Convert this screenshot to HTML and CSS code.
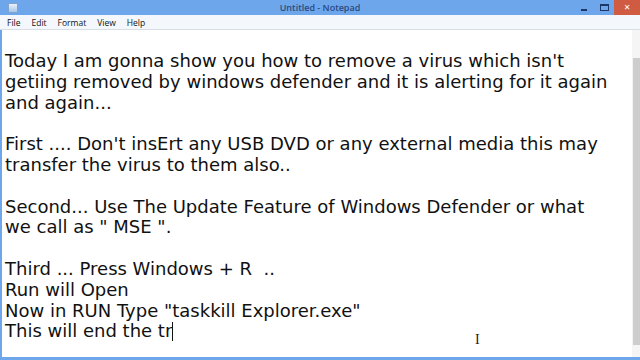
FILE: index.html
```html
<!DOCTYPE html>
<html>
<head>
<meta charset="utf-8">
<link rel="stylesheet" href="styles.css">
</head>
<body>
<div class="window">
  <div class="titlebar">
    <div class="appicon"></div>
    <div class="title">Untitled - Notepad</div>
    <div class="controls">
      <div class="ctl min"><span></span></div>
      <div class="ctl max"><span></span></div>
      <div class="ctl close">✕</div>
    </div>
  </div>
  <div class="menubar">
    <span>File</span><span>Edit</span><span>Format</span><span>View</span><span>Help</span>
  </div>
  <div class="client">
    <div class="editor">
      <p>Today I am gonna show you how to remove a virus which isn't</p>
      <p>getiing removed by windows defender and it is alerting for it again</p>
      <p>and again...</p>
      <p class="blank">&nbsp;</p>
      <p>First .... Don't insErt any USB DVD or any external media this may</p>
      <p>transfer the virus to them also..</p>
      <p class="blank">&nbsp;</p>
      <p>Second... Use The Update Feature of Windows Defender or what</p>
      <p>we call as " MSE ".</p>
      <p class="blank">&nbsp;</p>
      <p>Third ... Press Windows + R &nbsp;..</p>
      <p>Run will Open</p>
      <p>Now in RUN Type "taskkill Explorer.exe"</p>
      <p>This will end the tr<span class="caret"></span></p>
    </div>
    <div class="scrollbar">
      <div class="arrow up"></div>
      <div class="track"></div>
      <div class="arrow down"></div>
    </div>
    <div class="ibeam">I</div>
  </div>
</div>
</body>
</html>
```
FILE: styles.css
```css
html, body {
  margin: 0;
  padding: 0;
  width: 640px;
  height: 360px;
  overflow: hidden;
  background: #6ea6ec;
}
.window {
  width: 640px;
  height: 360px;
  display: flex;
  flex-direction: column;
  background: #6ea6ec;
}
.titlebar {
  height: 15px;
  display: flex;
  align-items: center;
  position: relative;
  background: #6ea6ec;
}
.appicon {
  width: 8px;
  height: 8px;
  margin-left: 8px;
  background: linear-gradient(#e9f1fb, #a9c6e8);
  border: 1px solid #7fa3cc;
}
.title {
  position: absolute;
  left: 0;
  right: 0;
  text-align: center;
  font: 600 9px "Open Sans", sans-serif;
  color: #2a4a80;
  top: 1px;
}
.controls {
  margin-left: auto;
  display: flex;
  height: 15px;
}
.ctl {
  width: 20px;
  height: 15px;
  display: flex;
  align-items: center;
  justify-content: center;
}
.min span {
  width: 6px;
  height: 2px;
  background: #1d3766;
  margin-top: 5px;
}
.max span {
  width: 7px;
  height: 4px;
  border: 1px solid #1d3766;
  border-top-width: 2px;
}
.close {
  width: 26px;
  background: #cf5b43;
  color: #fff;
  font: bold 8px "DejaVu Sans", sans-serif;
}
.menubar {
  height: 14px;
  background: #f4f8fc;
  display: flex;
  align-items: center;
  padding-left: 7px;
  font: 8.5px "Open Sans", sans-serif;
  color: #111;
  border-bottom: 1px solid #d8dee6;
}
.menubar span { margin-right: 11px; }
.client {
  flex: 1;
  display: flex;
  background: #fff;
  border-left: 2px solid #6ea6ec;
  border-bottom: 3px solid #6ea6ec;
  position: relative;
}
.editor {
  flex: 1;
  padding: 21px 0 0 3px;
  font: 18px "DejaVu Sans", sans-serif;
  color: #111;
  line-height: 20.8px;
  white-space: nowrap;
  overflow: hidden;
}
.editor p { margin: 0; }
.caret {
  display: inline-block;
  width: 1px;
  height: 19px;
  background: #111;
  vertical-align: -4px;
}
.scrollbar {
  width: 8px;
  display: flex;
  flex-direction: column;
  background: #f3f3f3;
}
.arrow { height: 28px; background: #f5f5f5; }
.arrow.down { height: 12px; }
.track {
  flex: 1;
  margin-left: 1px;
  background: #cdcdcd;
}
.ibeam {
  position: absolute;
  left: 473px;
  top: 302px;
  font: 14px "Liberation Serif", serif;
  color: #222;
}
```
